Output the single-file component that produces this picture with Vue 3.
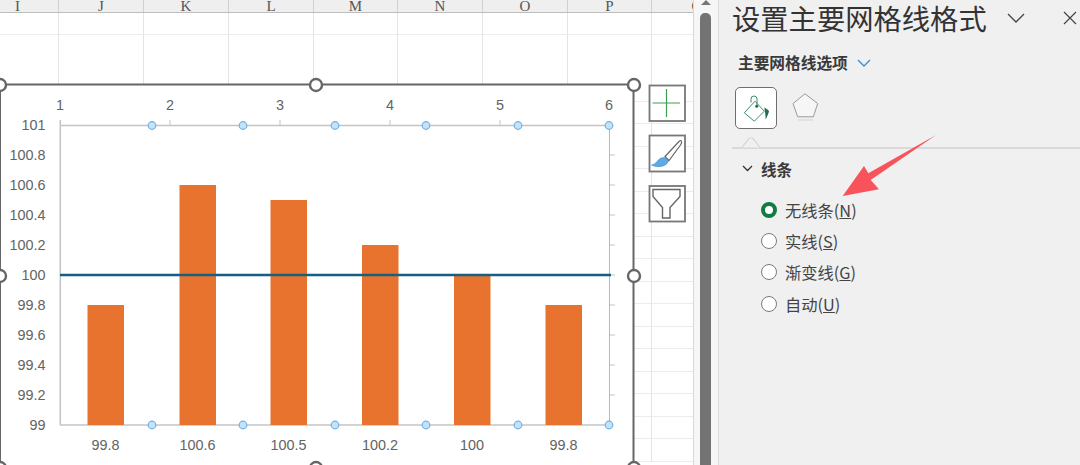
<script setup>
const columns = [
  { name: 'I', width: 59, cls: 'first' },
  { name: 'J', width: 85 },
  { name: 'K', width: 85 },
  { name: 'L', width: 85 },
  { name: 'M', width: 84 },
  { name: 'N', width: 85 },
  { name: 'O', width: 85 },
  { name: 'P', width: 84 },
  { name: 'Q', width: 91 }
]

// row heights of the sheet below the header
const rows = [21.5, 67, ...Array(16).fill(22.5)]

const gridStyle = {
  gridTemplateColumns: columns.map((c) => c.width + 'px').join(' '),
  gridTemplateRows: rows.map((r) => r + 'px').join(' ')
}
const cellCount = columns.length * rows.length

const bars = [
  { label: '99.8', value: 99.8, x: 87.5 },
  { label: '100.6', value: 100.6, x: 179.5 },
  { label: '100.5', value: 100.5, x: 270.5 },
  { label: '100.2', value: 100.2, x: 362 },
  { label: '100', value: 100, x: 454 },
  { label: '99.8', value: 99.8, x: 545.5 }
]

const valueY = (v) => 425 - (v - 99) * 150
const yLabels = ['101', '100.8', '100.6', '100.4', '100.2', '100', '99.8', '99.6', '99.4', '99.2', '99']
const topAxis = [60, 170, 280, 390, 500, 609]
const smallHandles = [152, 243, 335, 426, 518, 609]
const bigHandles = [
  [0, 85], [316, 85], [634, 85],
  [0, 276], [634, 276],
  [0, 468], [316, 468], [634, 468]
]
const options = [
  { text: '无线条', key: 'N', checked: true },
  { text: '实线', key: 'S' },
  { text: '渐变线', key: 'G' },
  { text: '自动', key: 'U' }
]
</script>

<template>
  <div class="page">
    <div class="sheet">
      <div class="col-head">
        <div v-for="c in columns" :key="c.name" class="col-cell" :class="c.cls" :style="{ width: c.width + 'px' }">{{ c.name }}</div>
      </div>
      <div class="cells" :style="gridStyle">
        <div v-for="n in cellCount" :key="n" class="cell"></div>
      </div>

      <svg class="chart" width="693" height="465" viewBox="0 0 693 465">
        <rect x="0" y="84.5" width="633.5" height="384" fill="#fff" stroke="#666" stroke-width="2" />

        <line x1="60" y1="125.5" x2="609" y2="125.5" stroke="#c4c4c4" stroke-width="1.5" />
        <line x1="60" y1="425" x2="609" y2="425" stroke="#c4c4c4" stroke-width="1.5" />
        <line x1="60.3" y1="120" x2="60.3" y2="425" stroke="#c4c4c4" stroke-width="1.5" />
        <line x1="609.5" y1="125" x2="609.5" y2="425" stroke="#b8b8b8" />
        <line v-for="x in topAxis.slice(1, 5)" :key="x" :x1="x" y1="120" :x2="x" y2="125" stroke="#c4c4c4" />
        <line v-for="(l, i) in yLabels.slice(1, 10)" :key="l" x1="610" :y1="155 + i * 30" x2="615" :y2="155 + i * 30" stroke="#c4c4c4" />

        <text v-for="(x, i) in topAxis" :key="x" :x="x" y="110" text-anchor="middle" class="axis-text">{{ i + 1 }}</text>
        <text v-for="(l, i) in yLabels" :key="l" x="45.5" :y="130 + i * 30" text-anchor="end" class="axis-text">{{ l }}</text>

        <rect v-for="b in bars" :key="b.x" :x="b.x" :y="valueY(b.value)" width="36.5" :height="425 - valueY(b.value)" fill="#e8732f" />
        <text v-for="b in bars" :key="'l' + b.x" :x="b.x + 18" y="450" text-anchor="middle" class="axis-text">{{ b.label }}</text>

        <line x1="60" y1="275" x2="611" y2="275" stroke="#156082" stroke-width="2.5" />

        <g fill="#c4e3f9" stroke="#6fb2e6" stroke-width="1.2">
          <circle v-for="x in smallHandles" :key="x" :cx="x" cy="125.5" r="3.8" />
          <circle v-for="x in smallHandles" :key="'b' + x" :cx="x" cy="425" r="3.8" />
        </g>
        <circle v-for="h in bigHandles" :key="h.join()" :cx="h[0]" :cy="h[1]" r="6" fill="#fff" stroke="#666" stroke-width="2.4" />

        <g fill="#fff" stroke="#777" stroke-width="1.8">
          <rect x="649.5" y="85.5" width="35.5" height="35.5" />
          <rect x="649.5" y="135.5" width="35.5" height="36" />
          <rect x="649.5" y="186" width="35.5" height="35.5" />
        </g>
        <path d="M652.5 103H680M666.5 89V117" stroke="#3f9f52" stroke-width="1.2" fill="none" />
        <path d="M665 156.5L679 141.5Q681 139.5 681.5 141.5Q682 143 680.5 145L669 160.5Z" fill="#fff" stroke="#666" stroke-width="1.2" />
        <path d="M664 157.5Q668 159 668.5 161.5Q666 166 661 166.5Q656 167.5 651.5 165Q655 164.5 657 161.5Q659.5 157.5 664 157.5Z" fill="#5fa9e4" stroke="#3d8fd3" stroke-width=".6" />
        <path d="M653 189.5H680V196.5L670 207.5V218H662.5V207.5L653 196.5Z" fill="#fff" stroke="#666" stroke-width="1.4" />
      </svg>
    </div>

    <div class="scrollbar">
      <div class="scroll-arrow"></div>
      <div class="scroll-thumb"></div>
    </div>

    <aside class="panel">
      <div class="panel-title">
        <span class="title-text">设置主要网格线格式</span>
        <svg class="title-chevron" width="18" height="10" viewBox="0 0 18 10"><path d="M1 1L9 9L17 1" fill="none" stroke="#444" stroke-width="1.3" /></svg>
        <svg class="title-close" width="14" height="14" viewBox="0 0 14 14"><path d="M1 1L13 13M13 1L1 13" fill="none" stroke="#444" stroke-width="1.2" /></svg>
      </div>

      <div class="sub-title">
        <span>主要网格线选项</span>
        <svg width="14" height="8" viewBox="0 0 14 8"><path d="M1 1L7 7L13 1" fill="none" stroke="#3b8fd6" stroke-width="1.4" /></svg>
      </div>

      <div class="tabs">
        <div class="tab active">
          <svg width="32" height="32" viewBox="0 0 32 32">
            <path d="M4.3 20.8L15 9.2L24.3 19.2L14.3 29.2Z" fill="none" stroke="#3f8f6c" stroke-width="1" />
            <path d="M11 10.5V7Q11 4 14 4Q17 4 17 7V14" fill="none" stroke="#3f8f6c" stroke-width="1" />
            <circle cx="16.7" cy="14.2" r="1.5" fill="#1f6f4c" />
            <path d="M24.3 15.5Q29 18 29 19.5Q28 23 25.7 27.5Q25.5 21 24.3 15.5Z" fill="#1f6f4c" />
          </svg>
        </div>
        <div class="tab">
          <svg width="27" height="30" viewBox="0 0 27 30">
            <path d="M13 .8L25.7 10.5L21.3 23.8H5.7L1 10.5Z" fill="#f6f6f6" stroke="#999" stroke-width="1" stroke-linejoin="round" />
            <path d="M6 27H21" stroke="#ddd" stroke-width="1.5" />
          </svg>
        </div>
      </div>

      <div class="divider">
        <svg class="notch" width="20" height="11" viewBox="0 0 20 11"><path d="M0 10.5L7 1.5Q9 0 11 1.5L18 10.5" fill="#f0f0f0" stroke="#d4d4d4" stroke-width="1.2" /></svg>
      </div>

      <div class="section-head">
        <svg width="11" height="7" viewBox="0 0 11 7"><path d="M1 1L5.5 5.5L10 1" fill="none" stroke="#333" stroke-width="1.3" /></svg>
        <span>线条</span>
      </div>

      <div class="radio-list">
        <div v-for="o in options" :key="o.key" class="radio-row">
          <span class="radio" :class="{ checked: o.checked }"></span>
          <span>{{ o.text }}(<u>{{ o.key }}</u>)</span>
        </div>
      </div>

      <svg class="arrow" width="100" height="65" viewBox="0 0 100 65">
        <path d="M97 2L31.7 47L40 56.3L3.7 63L25 33L29.3 40.3Z" fill="#f8535b" />
      </svg>
    </aside>
  </div>
</template>

<style scoped>
.page {
  display: flex;
  width: 1080px;
  height: 465px;
  overflow: hidden;
  font-family: "Noto Sans CJK SC", "Liberation Sans", sans-serif;
}

.sheet {
  position: relative;
  display: flex;
  flex-direction: column;
  width: 693px;
  background: #fff;
  overflow: hidden;
}

.col-head {
  display: flex;
  flex: none;
  height: 13px;
  background: #efefef;
  border-bottom: 1px solid #bdbdbd;
  box-sizing: border-box;
}

.col-cell {
  flex: none;
  box-sizing: border-box;
  height: 12px;
  border-right: 1px solid #d0d0d0;
  text-align: center;
  font: 15px/12px "Liberation Serif", serif;
  color: #555;
}

.col-cell.first {
  padding-right: 23px;
}

.cells {
  display: grid;
  flex: none;
}

.cell {
  box-sizing: border-box;
  border-right: 1px solid #e4e4e4;
  border-bottom: 1px solid #ececec;
}

.chart {
  position: absolute;
  left: 0;
  top: 0;
}

.axis-text {
  font: 14.4px "Liberation Sans", sans-serif;
  fill: #636363;
}

.scrollbar {
  flex: none;
  width: 26px;
  display: flex;
  flex-direction: column;
  align-items: center;
  box-sizing: border-box;
  background: #f6f6f6;
  border-left: 1px solid #d8d8d8;
  border-right: 1px solid #dcdcdc;
  padding-right: 1px;
}

.scroll-arrow {
  width: 0;
  height: 0;
  flex: none;
  border: 5px solid transparent;
  border-top: none;
  border-bottom-color: #777;
}

.scroll-thumb {
  flex: 1;
  width: 11px;
  margin-top: 8px;
  background: #737373;
  border-radius: 5px 5px 0 0;
}

.panel {
  position: relative;
  flex: 1;
  background: #f0f0f0;
  color: #333;
  padding-left: 13px;
}

.panel-title {
  display: flex;
  align-items: center;
  height: 33px;
  padding-top: 1px;
}

.title-text {
  font-size: 28.3px;
  line-height: 33px;
  color: #333;
  white-space: nowrap;
}

.title-chevron {
  margin-left: 20px;
}

.title-close {
  margin-left: 38px;
}

.sub-title {
  display: flex;
  align-items: center;
  gap: 9px;
  margin: 18px 0 0 6px;
  font-size: 15.7px;
  font-weight: 700;
  line-height: 22px;
  color: #3a3a3a;
}

.tabs {
  display: flex;
  gap: 15px;
  margin: 13px 0 0 3px;
  align-items: center;
}

.tab {
  display: flex;
  align-items: center;
  justify-content: center;
  width: 42px;
  height: 42px;
  box-sizing: border-box;
}

.tab.active {
  background: #fff;
  border: 1.5px solid #6e6e6e;
  border-radius: 5px;
}

.tab:not(.active) {
  width: 27px;
}

.divider {
  position: relative;
  height: 2px;
  margin-top: 18px;
  background: #d9d9d9;
}

.notch {
  position: absolute;
  left: 10px;
  top: -10px;
}

.section-head {
  display: flex;
  align-items: center;
  gap: 8px;
  margin: 7.5px 0 0 10px;
  font-size: 15.5px;
  font-weight: 700;
  line-height: 24px;
  color: #3a3a3a;
}

.radio-list {
  display: flex;
  flex-direction: column;
  margin: 13.5px 0 0 29px;
}

.radio-row {
  display: flex;
  align-items: center;
  gap: 8px;
  height: 31.3px;
  font-size: 16.3px;
  color: #444;
}

.radio {
  flex: none;
  width: 16px;
  height: 16px;
  box-sizing: border-box;
  border: 1.5px solid #7a7a7a;
  border-radius: 50%;
  background: #fff;
}

.radio.checked {
  border: 4.5px solid #107c41;
}

.arrow {
  position: absolute;
  left: 120px;
  top: 133px;
}
</style>
